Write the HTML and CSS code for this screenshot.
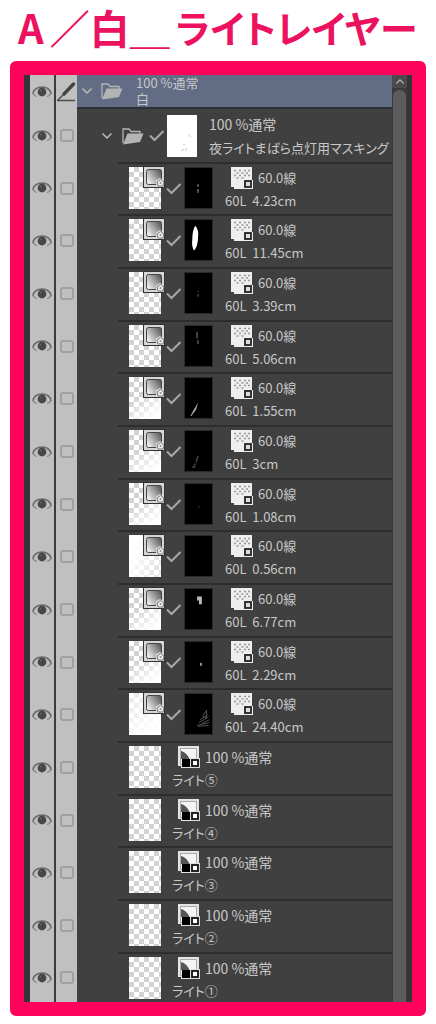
FILE: index.html
```
<!DOCTYPE html>
<html lang="ja">
<head>
    <meta charset="UTF-8">
    <meta name="viewport" content="width=device-width, initial-scale=1.0">
    <title>A／白＿ライトレイヤー</title>
    <link rel="stylesheet" href="styles.css">
</head>
<body>

<svg class="sprite" aria-hidden="true">
    <symbol id="eye" viewBox="0 0 20 14">
        <path d="M1 9C1 5 5 2 10 2s9 3 9 7" fill="none" stroke="#6c6c6c" stroke-width="1.6"/>
        <path d="M1 9c1 1 2 2 4 2.500M19 9c-1 1-2 2-4 2.500" fill="none" stroke="#888" stroke-width="1.2"/>
        <circle cx="10" cy="7" r="4.4" fill="#484848"/>
        <circle cx="8.600" cy="5.500" r="0.800" fill="#707070"/>
    </symbol>
    <symbol id="pen" viewBox="0 0 20 20">
        <path d="M16.500 2L7 12" fill="none" stroke="#444" stroke-width="3.400" stroke-linecap="round"/>
        <path d="M7 12l-6.500 6.500H18" fill="none" stroke="#4c4c4c" stroke-width="1.400"/>
    </symbol>
    <symbol id="chevron" viewBox="0 0 12 8">
        <path d="M1.500 1.500L6 6l4.500-4.500" fill="none" stroke="#bbb" stroke-width="1.500"/>
    </symbol>
    <symbol id="folder" viewBox="0 0 22 18">
        <path d="M1 16V2h6l2 2.500h9V7" fill="none" stroke="#b4b4b4" stroke-width="1.300"/>
        <path d="M5.500 6.500h16L18 15 1 17.500z" fill="#b4b4b4"/>
    </symbol>
    <symbol id="check" viewBox="0 0 16 12">
        <path d="M1 5.500L5.500 10 14.500 1" fill="none" stroke="#a8a8a8" stroke-width="2"/>
    </symbol>
    <symbol id="gradient" viewBox="0 0 22 22">
        <rect x="0.500" y="0.500" width="21" height="21" fill="#d6d6d6" stroke="#333"/>
        <rect x="3.500" y="3.500" width="15" height="15" rx="2" fill="url(#fade)" stroke="#444"/>
        <path d="M13 14.500l4-2.500 4 2.500V21h-8z" fill="#ddd"/>
        <path d="M14 16l3.500-2.500L21 16l-1 4h-5z" fill="#eee" stroke="#777"/>
        <circle cx="17.500" cy="17" r="1" fill="#888"/>
    </symbol>
    <symbol id="tone" viewBox="0 0 22 22">
        <path d="M0 0h21v13h1v9H3v-2H0z" fill="#eee"/>
        <path d="M3 3.500h2M8 3.500h2M13 3.500h2M17 3.500h2M5.500 6h2M10.500 6h2M15 6h2M3 8.500h2M8 8.500h2M13 8.500h2M17 8.500h2M5.500 11h2M10.500 11h2" stroke="#999" stroke-width="1.500"/>
        <rect x="14" y="14" width="6" height="6" fill="#ddd" stroke="#222" stroke-width="1.800"/>
    </symbol>
    <symbol id="mono" viewBox="0 0 22 22">
        <path d="M0 0h21v13h1v9H3v-2H0z" fill="#e4e4e4"/>
        <rect x="2.500" y="2.500" width="16" height="16" fill="#f4f4f4" stroke="#aaa"/>
        <path d="M3 5c4 1 7 4 8.500 8H3z" fill="#555"/>
        <rect x="4" y="13" width="8" height="8" fill="#000"/>
        <rect x="12" y="12" width="10" height="10" fill="#ddd"/>
        <rect x="14" y="14" width="6" height="6" fill="#fff" stroke="#111" stroke-width="1.800"/>
    </symbol>
    <defs>
        <linearGradient id="fade" x1="0" y1="0.700" x2="1" y2="0">
            <stop offset="0" stop-color="#eee"/>
            <stop offset="1" stop-color="#4c4c4c"/>
        </linearGradient>
    </defs>
</svg>

<header>
    <h1><span>A</span><span>／白＿</span><span class="kana">ライトレイヤー</span></h1>
</header>

<main class="frame">
    <div class="panel">
        <ul class="layers" id="layers">
            <li class="row row-root">
                <button type="button" class="eye" aria-label="表示"><svg><use href="#eye"/></svg></button>
                <button type="button" class="pen" aria-label="編集"><svg><use href="#pen"/></svg></button>
                <div class="body">
                    <button type="button" class="toggle" aria-label="開閉"><svg><use href="#chevron"/></svg></button>
                    <svg class="folder"><use href="#folder"/></svg>
                    <div class="text"><span>100 %通常</span><span>白</span></div>
                </div>
            </li>
            <li class="row row-group">
                <button type="button" class="eye" aria-label="表示"><svg><use href="#eye"/></svg></button>
                <label class="pick"><input type="checkbox" aria-label="選択"></label>
                <div class="body">
                    <button type="button" class="toggle" aria-label="開閉"><svg><use href="#chevron"/></svg></button>
                    <svg class="folder"><use href="#folder"/></svg>
                    <svg class="check"><use href="#check"/></svg>
                    <svg class="mask-white" viewBox="0 0 30 42"><path d="M21 19l3 3M16 29l2 1M14 36l3-2M19 33v3" stroke="#ccc" fill="none"/></svg>
                    <div class="text"><span>100 %通常</span><span>夜ライトまばら点灯用マスキング</span></div>
                </div>
            </li>
        </ul>
        <div class="scrollbar">
            <button type="button" class="scroll-up" aria-label="上へ"><svg><use href="#chevron"/></svg></button>
            <div class="scroll-thumb"></div>
        </div>
    </div>
</main>

<script>
    // Gradient layers: length, thumbnail fade and what is painted on the mask
    const gradients = [
        { size: '4.23cm', fade: 'none', mask: '<path d="M13 17v3M13 22v4" stroke="#555" stroke-width="2"/>' },
        { size: '11.45cm', fade: 'none', mask: '<path d="M10 6q4 4 3 12 0 9-4 14-3-3-2-12 0-9 3-14z" fill="#fff"/>' },
        { size: '3.39cm', fade: 'none', mask: '<path d="M13 19v1M13 22v3" stroke="#333" stroke-width="2"/>' },
        { size: '5.06cm', fade: 'none', mask: '<path d="M12 6v7M13 15v4" stroke="#444" stroke-width="2"/>' },
        { size: '1.55cm', fade: 'half', mask: '<path d="M5 40l3-6 5-8-2 7-5 7z" fill="#aaa"/>' },
        { size: '3cm', fade: 'half', mask: '<path d="M13 26l-2 7M10 34l-1 4M7 38h3" fill="none" stroke="#444" stroke-width="1.500"/>' },
        { size: '1.08cm', fade: 'half', mask: '<path d="M14 23v2" stroke="#222" stroke-width="2"/>' },
        { size: '0.56cm', fade: 'left', mask: '' },
        { size: '6.77cm', fade: 'half', mask: '<path d="M12 8h5v8h-3v-4h-2z" fill="#bbb"/>' },
        { size: '2.29cm', fade: 'half', mask: '<path d="M16 22v3" stroke="#999" stroke-width="2"/>' },
        { size: '24.40cm', fade: 'full', mask: '<path d="M18 23l4-6v8zM15 27l8-5M14 30l10-6M17 31l8-4M12 33l13-3M13 34l11-1" stroke="#555" fill="none"/>' }
    ];
    const lights = ['⑤', '④', '③', '②', '①'];

    const controls = `
        <button type="button" class="eye" aria-label="表示"><svg><use href="#eye"/></svg></button>
        <label class="pick"><input type="checkbox" aria-label="選択"></label>`;

    function addRow(content) {
        const row = document.createElement('li');
        row.className = 'row row-layer';
        row.innerHTML = controls + `<div class="body">${content}</div>`;
        document.getElementById('layers').appendChild(row);
    }

    gradients.forEach(layer => addRow(`
        <div class="thumb fade-${layer.fade}"><svg class="badge"><use href="#gradient"/></svg></div>
        <svg class="check"><use href="#check"/></svg>
        <svg class="mask" viewBox="0 0 27 42">${layer.mask}</svg>
        <div class="text">
            <span class="mode"><svg><use href="#tone"/></svg>60.0線</span>
            <span>60L&nbsp; ${layer.size}</span>
        </div>`));

    lights.forEach(number => addRow(`
        <div class="thumb"></div>
        <div class="text text-light">
            <span class="mode"><svg><use href="#mono"/></svg>100 %通常</span>
            <span>ライト${number}</span>
        </div>`));
</script>
</body>
</html>
```
FILE: styles.css
```
* {
    box-sizing: border-box;
}

body {
    margin: 0;
    background-color: #fff;
    font-family: "Noto Sans CJK JP", sans-serif;
    font-size: 14px;
    color: #c8c8c8;
}

svg {
    display: block;
    flex: none;
}

button {
    display: flex;
    align-items: center;
    justify-content: center;
    padding: 0;
    border: 0;
    background: none;
    cursor: pointer;
}

.sprite {
    position: absolute;
    width: 0;
    height: 0;
}

header {
    height: 61px;
    padding-left: 18px;
}

h1 {
    display: flex;
    gap: 6px;
    margin: 0;
    font-size: 40px;
    font-weight: 700;
    line-height: 54px;
    white-space: nowrap;
    color: #ec125f;
}

h1 .kana {
    font-size: 38px;
    font-feature-settings: "palt";
}

.frame {
    margin: 0 10px 8px;
    border: 14px solid #ff035c;
    border-radius: 6px;
    background-color: #ff035c;
}

.panel {
    display: flex;
    padding: 0 5px 0 6px;
    background-color: #353535;
    overflow: hidden;
}

.layers {
    flex: 1;
    min-width: 0;
    margin: 0;
    padding: 0;
    list-style: none;
    background-color: #404040;
}

.row {
    display: grid;
    grid-template-columns: 24px 23px 1fr;
    height: 53px;
}

.eye,
.pen,
.pick {
    display: flex;
    align-items: center;
    justify-content: center;
    background-color: #c0c0c0;
}

.eye svg {
    width: 20px;
    height: 14px;
}

.pen,
.pick {
    border-left: 2px solid #3c3c3c;
}

.pen svg {
    width: 20px;
    height: 20px;
}

.pick input {
    appearance: none;
    width: 14px;
    height: 13px;
    margin: 0;
    border: 2px solid #a0a0a0;
    border-radius: 3px;
}

.body {
    display: flex;
    min-width: 0;
}

.text {
    display: flex;
    flex-direction: column;
    white-space: nowrap;
}

.toggle svg {
    width: 12px;
    height: 8px;
}

.folder {
    width: 22px;
    height: 18px;
}

.check {
    width: 16px;
    height: 12px;
}

.row-root {
    height: 34px;
}

.row-root .body {
    align-items: center;
    padding-left: 4px;
    border-bottom: 2px solid #2c3038;
    background-color: #626c85;
}

.row-root .folder {
    margin: 0 13px 0 8px;
}

.row-root .text {
    font-size: 13px;
    line-height: 16px;
}

.row-group .body {
    align-items: center;
    padding-left: 24px;
}

.row-group .folder {
    margin: 0 5px 0 9px;
}

.mask-white {
    width: 30px;
    height: 42px;
    margin: 0 12px 0 2px;
    background-color: #fff;
}

.row-group .text {
    gap: 4px;
    font-feature-settings: "palt";
    line-height: 20px;
}

.row-group .text span + span {
    font-size: 13px;
}

.row-layer .body {
    align-items: flex-start;
    margin-left: 41px;
    padding: 3px 0 0 11px;
    border-top: 2px solid #2d2d2d;
}

.row-layer:nth-child(3n) {
    height: 52px;
}

.row-layer:last-child {
    height: 50px;
}

.thumb {
    position: relative;
    flex: none;
    width: 32px;
    height: 42px;
    background: conic-gradient(#d2d2d2 25%, #fff 0 50%, #d2d2d2 0 75%, #fff 0) 0 0 / 10px 10px;
}

.fade-half {
    background: linear-gradient(145deg, transparent 40%, #fff 90%), conic-gradient(#d2d2d2 25%, #fff 0 50%, #d2d2d2 0 75%, #fff 0) 0 0 / 10px 10px;
}

.fade-left {
    background: linear-gradient(110deg, #fff 20%, #ffffff60 90%), conic-gradient(#d2d2d2 25%, #fff 0 50%, #d2d2d2 0 75%, #fff 0) 0 0 / 10px 10px;
}

.fade-full {
    background: linear-gradient(145deg, #ffffff80, #fff 90%), conic-gradient(#d2d2d2 25%, #fff 0 50%, #d2d2d2 0 75%, #fff 0) 0 0 / 10px 10px;
}

.badge {
    position: absolute;
    top: -1px;
    left: 14px;
    width: 22px;
    height: 22px;
}

.row-layer .check {
    margin: 16px 2px 0 5px;
}

.mask {
    width: 29px;
    height: 42px;
    border: 1px solid #2a2a2a;
    background-color: #000;
}

.row-layer .text {
    margin-left: 12px;
    font-size: 13px;
}

.row-layer .text-light {
    margin-left: 11px;
    font-feature-settings: "palt";
}

.row-layer .text span {
    line-height: 24px;
}

.row-layer .text .mode {
    display: flex;
    gap: 5px;
    padding-left: 6px;
    line-height: 22px;
}

.row-layer .text-light .mode {
    font-size: 14px;
}

.mode svg {
    width: 22px;
    height: 22px;
}

.scrollbar {
    display: flex;
    flex-direction: column;
    width: 15px;
    gap: 2px;
    background-color: #3a3a3a;
}

.scroll-up {
    height: 13px;
    background-color: #4a4a4a;
}

.scroll-up svg {
    width: 10px;
    height: 7px;
    transform: rotate(180deg);
}

.scroll-thumb {
    flex: 1;
    margin: 0 1px;
    border-radius: 6px 6px 0 0;
    background-color: #5c5c5c;
}
```
